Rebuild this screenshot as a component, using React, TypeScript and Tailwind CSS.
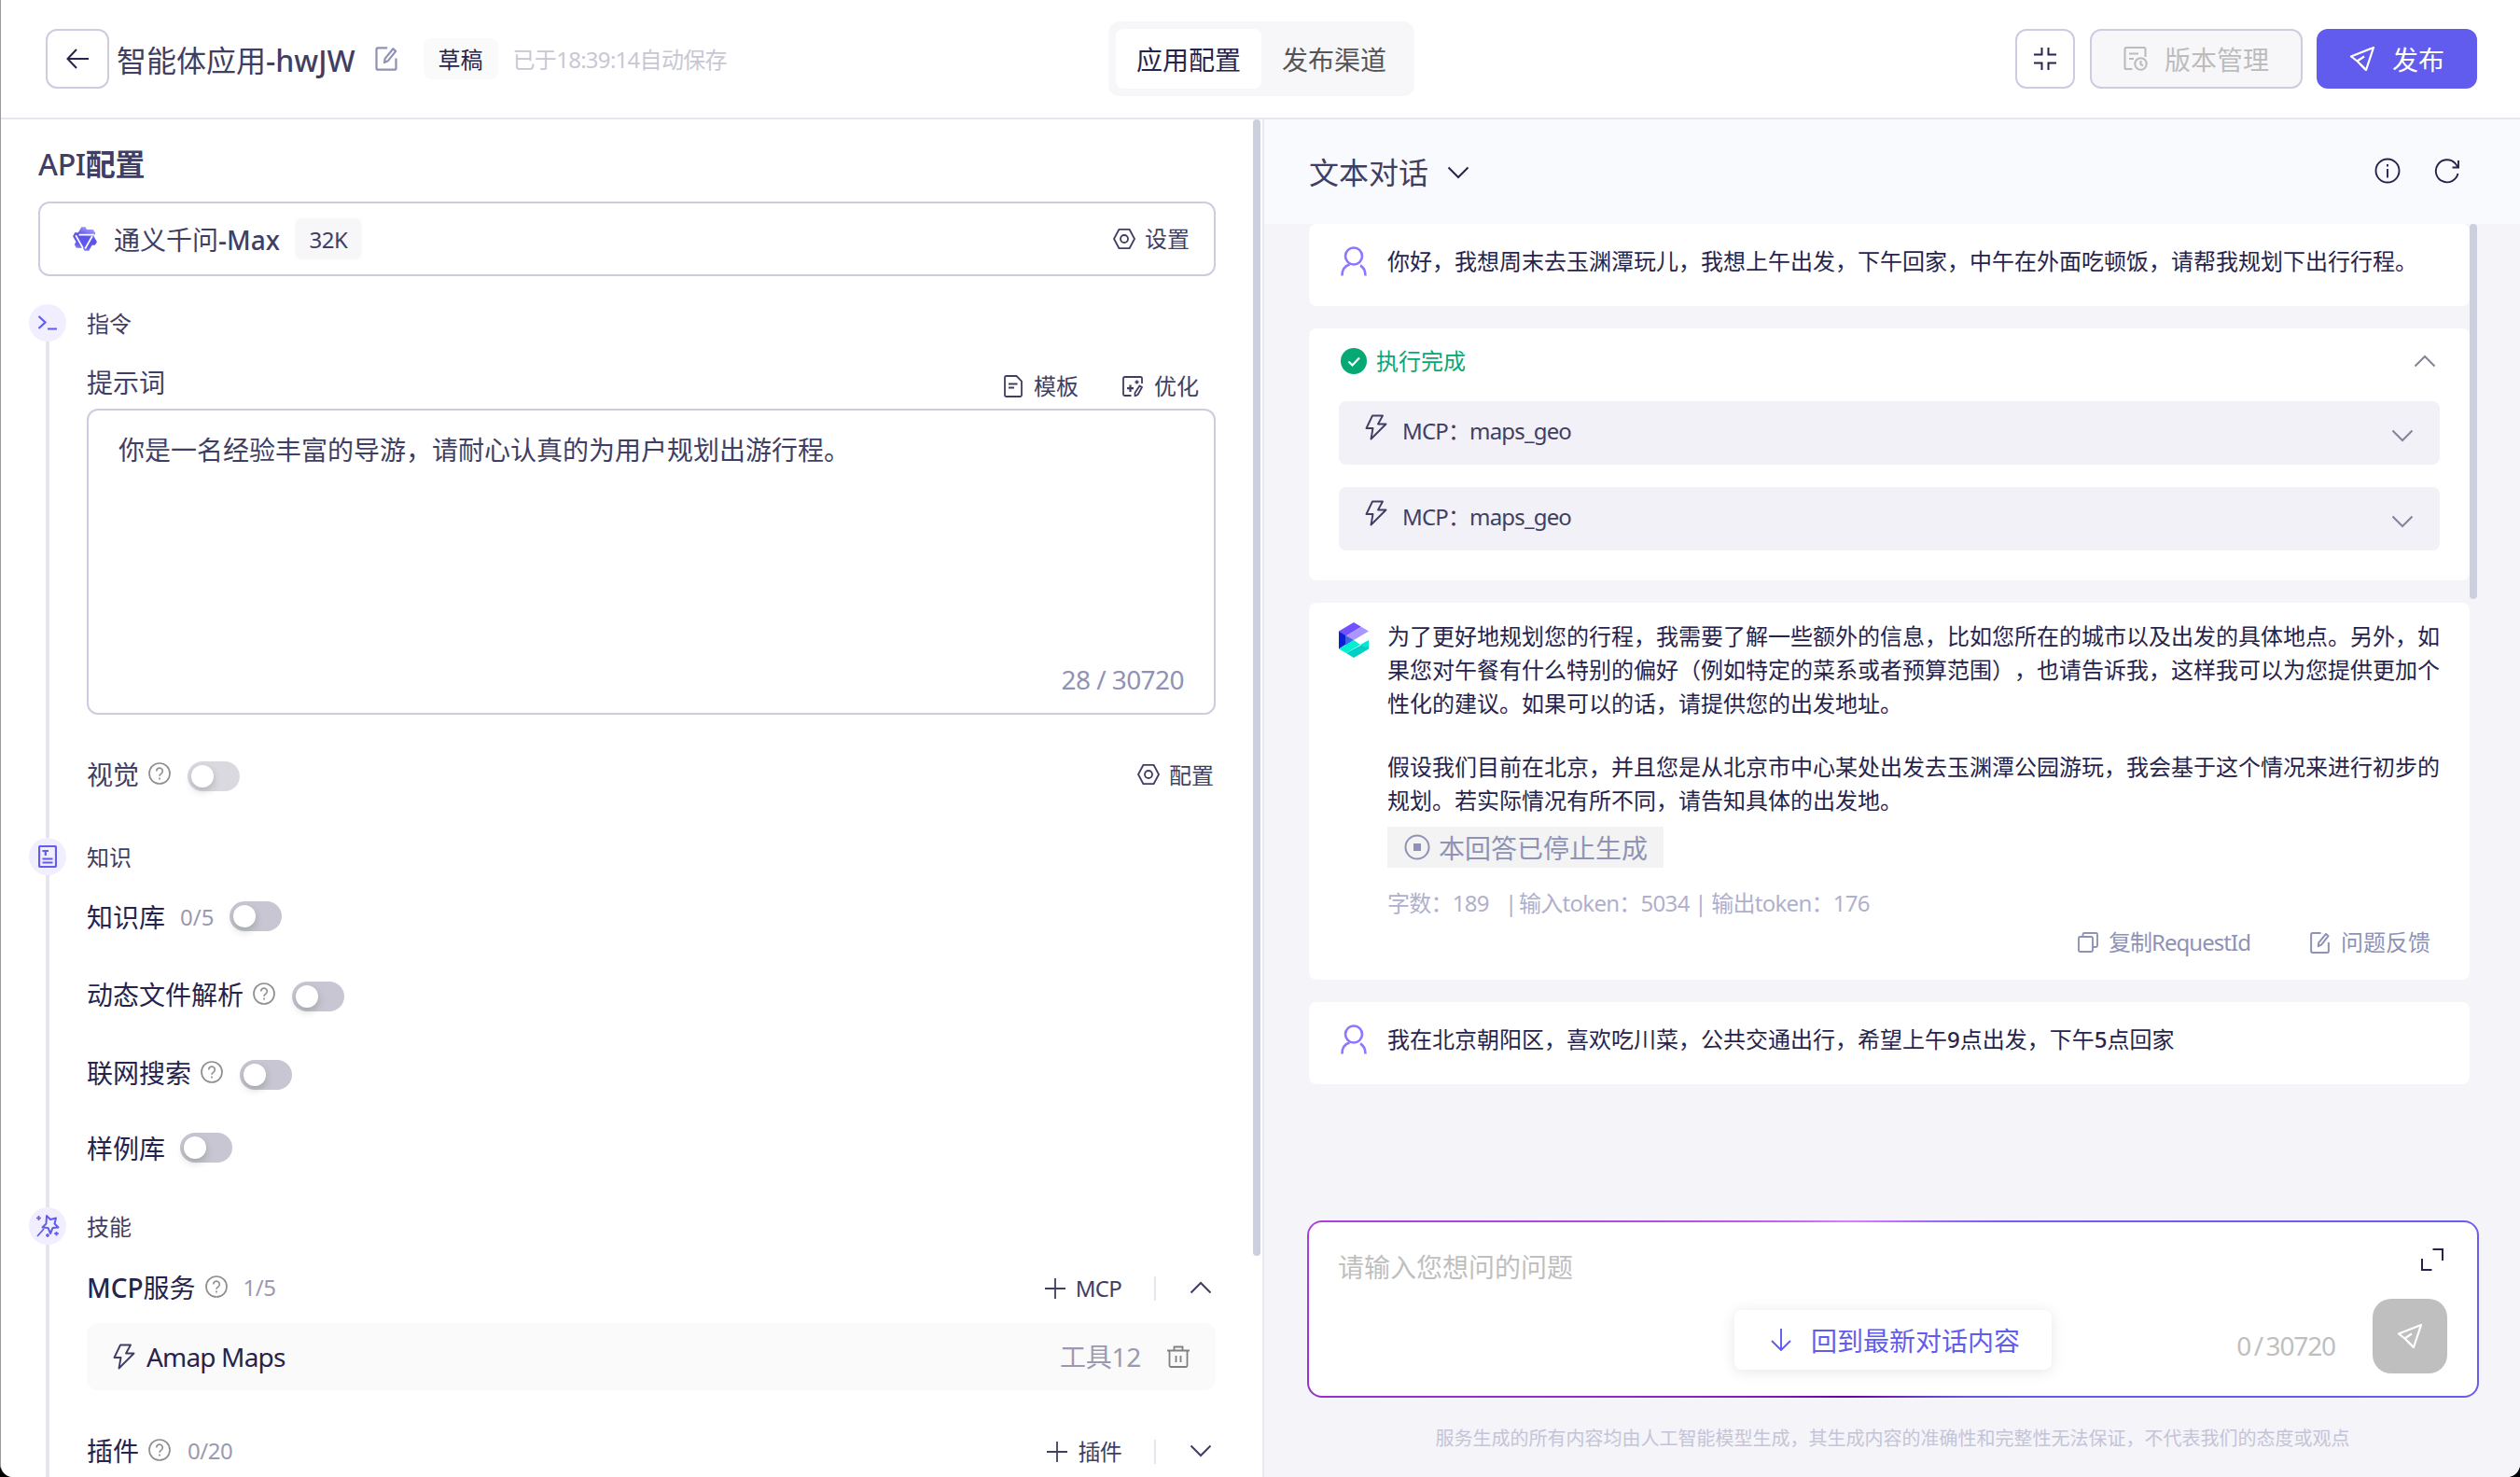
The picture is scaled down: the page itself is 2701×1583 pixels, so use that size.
import type { ReactNode } from 'react';
import clsx from 'clsx';

type IconProps = { className?: string };

const Svg = ({ className, box = '0 0 24 24', width = 2, children }: IconProps & { box?: string; width?: number; children: ReactNode }) => (
  <svg viewBox={box} className={clsx('shrink-0', className)} fill="none" stroke="currentColor" strokeWidth={width}>
    {children}
  </svg>
);

const EditIcon = ({ className }: IconProps) => (
  <Svg className={className} width={1.9}>
    <path d="M13 2H4.5A1.5 1.5 0 0 0 3 3.500v17A1.500 1.500 0 0 0 4.500 22h15a1.500 1.500 0 0 0 1.500-1.500V11.500" />
    <path d="M18.300 2.800l2.400 2.200-7.200 9-3.200 1.500 0.500-3.600z" strokeLinejoin="round" />
  </Svg>
);

const HelpIcon = ({ className }: IconProps) => (
  <Svg className={clsx('size-6 text-[#8f8f8f]', className)} width={1.7}>
    <circle cx="12" cy="12" r="11" />
    <path d="M8.700 9.400a3.300 3.300 0 1 1 5.200 2.700c-1.200.8-1.900 1.300-1.900 2.700" />
    <path d="M12 16.600v2" />
  </Svg>
);

const HexIcon = ({ className }: IconProps) => (
  <Svg className={clsx('size-6', className)} width={1.8}>
    <path d="M6.500 1.800h11L23 12l-5.500 10.200h-11L1 12z" strokeLinejoin="round" />
    <circle cx="12" cy="12" r="4" />
  </Svg>
);

const BoltIcon = ({ className }: IconProps) => (
  <Svg className={clsx('h-7 w-6', className)} box="0 0 24 28" width={1.9}>
    <path d="M8 1.500h11l-5 9h8.500L6.500 26.500l2-11.500h-7z" strokeLinejoin="round" />
  </Svg>
);

const SendIcon = ({ className }: IconProps) => (
  <Svg className={clsx('size-7', className)} box="0 0 28 28" width={2.2}>
    <path d="M26 2L2 11.500l6.500 5L18 26z" strokeLinejoin="round" />
    <path d="M8.500 16.500L16 11.500M18 26l-6.500-6.500" />
  </Svg>
);

const Chevron = ({ up, className }: IconProps & { up?: boolean }) => (
  <Svg className={clsx('h-3.5 w-6', className)} box="0 0 24 14" width={2}>
    <path d={up ? 'M1.500 12.500L12 2l10.500 10.500' : 'M1.500 1.500L12 12 22.500 1.500'} />
  </Svg>
);

const PlusIcon = () => (
  <Svg className="size-[22px]" box="0 0 22 22" width={1.8}>
    <path d="M11 0v22M0 11h22" />
  </Svg>
);

const UserIcon = () => (
  <Svg className="h-8 w-7 text-[#8f75ff]" box="0 0 28 32" width={2.6}>
    <circle cx="14" cy="10.500" r="9" />
    <path d="M1.500 31.500c0-6 3-10.500 8-12M26.500 31.500c0-5-2-9-5.500-11" />
  </Svg>
);

const QwenLogo = () => (
  <svg viewBox="0 0 24 24" className="size-7 shrink-0">
    <defs>
      <linearGradient id="qwen" x1="0.800" y1="0" x2="0.400" y2="1">
        <stop offset="0" stopColor="#b3adf8" />
        <stop offset="0.450" stopColor="#5b52ea" />
        <stop offset="0.800" stopColor="#625aec" />
        <stop offset="1" stopColor="#8d86f2" />
      </linearGradient>
    </defs>
    <path
      fill="url(#qwen)"
      d="M12.604 1.340c.393.690.784 1.382 1.174 2.075a.18.18 0 00.157.091h5.552c.174 0 .322.110.446.327l1.454 2.570c.190.337.240.478.024.837-.260.430-.513.864-.760 1.300l-.367.658c-.106.196-.223.280-.040.512l2.652 4.637c.172.301.111.494-.043.770-.437.785-.882 1.564-1.335 2.340-.159.272-.352.375-.680.370-.777-.016-1.552-.010-2.327.016a.099.099 0 00-.081.050 575.097 575.097 0 01-2.705 4.740c-.169.293-.380.363-.725.364-.997.003-2.002.004-3.017.002a.537.537 0 01-.465-.271l-1.335-2.323a.09.09 0 00-.083-.049H4.982c-.285.030-.553-.001-.805-.092l-1.603-2.770a.543.543 0 01-.002-.540l1.207-2.120a.198.198 0 000-.197 550.951 550.951 0 01-1.875-3.272l-.790-1.395c-.160-.310-.173-.496.095-.965.465-.813.927-1.625 1.387-2.436.132-.234.304-.334.584-.335a338.300 338.300 0 012.589-.001.124.124 0 00.107-.063l2.806-4.895a.488.488 0 01.422-.246c.524-.001 1.053 0 1.583-.006L11.704 1c.341-.003.724.032.900.340z"
    />
    <path d="M6.500 8.200h14M3.600 8.800l6.600 11.700M18.800 9.500l-6.600 11.500" stroke="#fff" strokeWidth="1.500" fill="none" />
  </svg>
);

const BotLogo = () => (
  <svg viewBox="0 0 34 38" className="h-[38px] w-[34px] shrink-0">
    <path d="M1 9.500L17 0l8 4.700L8 15z" fill="#7350ff" />
    <path d="M8 15L25 4.700l8 4.800L17 19z" fill="#a996ff" />
    <path d="M1 9.500L8 14v10L1 28.500z" fill="#0a1fd6" />
    <path d="M8 14l9 5-9 6z" fill="#3d63e6" />
    <path d="M1 28.500L17 19l7 5L9 33z" fill="#00f0d0" />
    <path d="M9 33l24-13v8.500L17 38z" fill="#00cfc6" />
    <path d="M24 24l9-5v6l-3 2z" fill="#00ead2" />
  </svg>
);

const Toggle = ({ disabled, className }: IconProps & { disabled?: boolean }) => (
  <span className={clsx('flex h-8 w-14 shrink-0 items-center rounded-full px-1', disabled ? 'bg-[#dad9e0]' : 'bg-[#c8c6d2]', className)}>
    <span className="size-6 rounded-full bg-white shadow-[0_4px_8px_rgba(0,35,11,0.2)]" />
  </span>
);

const Section = ({ title, icon, className, children }: { title: string; icon: ReactNode; className: string; children: ReactNode }) => (
  <section className={clsx('flex shrink-0', className)}>
    <div className="flex w-10 flex-col items-center text-[#615ced]">
      <div className="flex size-10 shrink-0 items-center justify-center rounded-full bg-[#f1efff]">{icon}</div>
      <div className="w-1 flex-1 bg-[#e6e6ee]" />
    </div>
    <div className="ml-[22px] flex w-[1210px] flex-col">
      <div className="flex h-10 shrink-0 items-center pt-0.5 text-2xl text-[#403e63]">{title}</div>
      {children}
    </div>
  </section>
);

const knowledge = [
  { label: '知识库', count: '0/5', help: false, row: 'mt-6', toggle: 'ml-[17px]' },
  { label: '动态文件解析', help: true, row: 'mt-[46px]', toggle: 'ml-[18px]' },
  { label: '联网搜索', help: true, row: 'mt-11', toggle: 'ml-[18px]' },
  { label: '样例库', help: false, row: 'mt-[38px]', toggle: 'ml-4' },
];

const Header = () => (
  <header className="flex h-32 shrink-0 items-center border-b-2 border-[#e6e6ee] bg-white pr-[46px] pl-12">
    <div className="flex w-[1139px] items-center">
      <button className="flex h-16 w-[68px] items-center justify-center rounded-xl border-2 border-[#cccdde]">
        <Svg className="size-6 text-[#26244c]" width={2}>
          <path d="M24 12H1.500M11 2L1.500 12 11 22" />
        </Svg>
      </button>
      <h1 className="ml-2 pt-1 text-[32px] text-[#403e63]">
        智能体应用<span className="font-medium">-hwJW</span>
      </h1>
      <EditIcon className="ml-[19px] size-7 text-[#8f92b5]" />
      <span className="ml-[26px] flex h-11 items-center rounded-lg bg-[#fafafa] px-4 pt-0.5 text-2xl text-[#26244c]">草稿</span>
      <span className="ml-4 pt-0.5 text-2xl tracking-[-0.030em] text-[#c8c8d4]">已于18:39:14自动保存</span>
    </div>
    <nav className="flex h-20 w-[328px] items-center rounded-xl bg-[#f7f7f9] p-2 text-[28px]">
      <span className="flex h-16 w-[156px] items-center justify-center rounded-lg bg-white pt-0.5 text-[#26244c]">应用配置</span>
      <span className="flex h-16 w-[156px] items-center justify-center pt-0.5 text-[#555]">发布渠道</span>
    </nav>
    <div className="ml-auto flex gap-4">
      <button className="flex size-16 items-center justify-center rounded-xl border-2 border-[#cccdde]">
        <Svg className="size-6 text-[#26244c]" width={2}>
          <path d="M8.500 0v7.500H0M15.500 0v7.500H24M8.500 24v-7.500H0M15.500 24v-7.500H24" />
        </Svg>
      </button>
      <button className="flex h-16 w-[228px] items-center justify-center gap-[18px] rounded-xl border-2 border-[#cccdde] bg-[#f7f7f9] text-[28px] text-[#bcbcbc]">
        <Svg className="size-[26px]" box="0 0 26 26" width={2.1}>
          <path d="M9.500 24H3a1.500 1.500 0 0 1-1.500-1.500v-20A1.500 1.500 0 0 1 3 1h19a1.500 1.500 0 0 1 1.500 1.500V11M6 7.500h10M6 13h5" />
          <circle cx="18.500" cy="18.500" r="6.200" />
          <path d="M18.500 15v4l2.500 1.500" />
        </Svg>
        <span className="pt-0.5">版本管理</span>
      </button>
      <button className="-ml-px flex h-16 w-[172px] items-center justify-center gap-[18px] rounded-xl bg-[#615ced] text-[28px] text-white">
        <SendIcon />
        <span className="pt-0.5">发布</span>
      </button>
    </div>
  </header>
);

const AddActions = ({ label, up }: { label: string; up?: boolean }) => (
  <div className="ml-auto flex items-center pt-0.5 pr-1 text-2xl text-[#403e63]">
    <PlusIcon />
    <span className="ml-[11px] tracking-[-0.030em]">{label}</span>
    <span className="ml-[35px] h-[26px] w-0.5 bg-[#e6e6ee]" />
    <Chevron up={up} className="mb-0.5 ml-9" />
  </div>
);

const ConfigPanel = () => (
  <aside className="flex w-[1352px] shrink-0 overflow-hidden bg-white">
    <div className="flex w-[1342px] flex-col">
      <h2 className="mt-6 ml-10 flex h-12 shrink-0 items-center text-[32px] font-bold tracking-[-0.010em] text-[#403e63]">
        <span className="font-medium">API</span>配置
      </h2>
      <div className="mt-4 ml-10 flex h-20 w-[1262px] shrink-0 items-center rounded-xl border-2 border-[#cccdde] pr-[26px] pl-[34px]">
        <QwenLogo />
        <span className="ml-[17px] pt-0.5 text-[28px] text-[#403e63]">
          通义千问<span className="font-medium">-Max</span>
        </span>
        <span className="ml-4 flex h-11 w-[72px] items-center justify-center rounded-lg bg-[#f7f7fa] pt-0.5 text-2xl tracking-[-0.020em] text-[#403e63]">32K</span>
        <span className="ml-auto flex items-center gap-2.5 text-2xl text-[#403e63]">
          <HexIcon />
          设置
        </span>
      </div>

      <div className="mt-[30px] ml-[30px] flex flex-col">
        <Section
          title="指令"
          className="h-[572px]"
          icon={
            <Svg className="h-5 w-[22px]" box="0 0 22 20" width={2.2}>
              <path d="M1.500 3l7 6.500-7 6.500M11 16.500h10" />
            </Svg>
          }
        >
          <div className="mt-5 flex h-[52px] shrink-0 items-center pr-[18px] text-[#403e63]">
            <span className="pb-1 text-[28px]">提示词</span>
            <span className="ml-auto flex items-center gap-3 pt-1 text-2xl">
              <Svg className="h-6 w-5" box="0 0 20 24" width={1.8}>
                <path d="M2.500 1h11L19 6.500v15a1.500 1.500 0 0 1-1.500 1.500h-15A1.500 1.500 0 0 1 1 21.500v-19A1.500 1.500 0 0 1 2.500 1zM5 9.500h9.500M5 13.500h6" />
              </Svg>
              模板
            </span>
            <span className="ml-[47px] flex items-center gap-3 pt-1 text-2xl">
              <Svg className="size-[22px]" box="0 0 22 22" width={1.8}>
                <path d="M21 8V2.500A1.500 1.500 0 0 0 19.500 1h-17A1.500 1.500 0 0 0 1 2.500v17A1.500 1.500 0 0 0 2.500 21h7" />
                <path d="M18.500 10.500l2.500 1.500-4.500 8-3 1.500v-3.500z" strokeLinejoin="round" />
                <path d="M8.500 9.500v7.500M5 13.200h7" strokeWidth={2.2} />
                <path d="M15.500 4.500v4M13.500 6.500h4" />
              </Svg>
              优化
            </span>
          </div>
          <div className="flex h-[328px] shrink-0 flex-col justify-between rounded-xl border-2 border-[#cccdde] pt-[22px] pr-8 pb-4 pl-8 text-[28px] leading-10 text-[#403e63]">
            <p>你是一名经验丰富的导游，请耐心认真的为用户规划出游行程。</p>
            <span className="self-end tracking-[-0.020em] text-[#8f92b5]">28 / 30720</span>
          </div>
          <div className="mt-[46px] flex h-10 shrink-0 items-center text-[28px] text-[#403e63]">
            <span className="pb-1">视觉</span>
            <HelpIcon className="mb-1.5 ml-2.5" />
            <Toggle disabled className="ml-[18px]" />
            <span className="ml-auto flex items-center gap-2.5 pr-0.5 pb-0.5 text-2xl">
              <HexIcon className="mb-0.5" />
              配置
            </span>
          </div>
        </Section>

        <Section
          title="知识"
          className="h-[396px]"
          icon={
            <Svg className="h-6 w-5" box="0 0 20 24" width={2.2}>
              <rect x="1" y="1" width="18" height="22" rx="1.500" />
              <path d="M4.500 6H11M7.800 6v5M4.500 14.500h11M4.500 18.500h11" />
            </Svg>
          }
        >
          {knowledge.map(item => (
            <div key={item.label} className={clsx('flex h-10 shrink-0 items-center text-[28px] text-[#26244c]', item.row)}>
              <span className={item.help ? 'pb-1' : 'pt-0.5'}>{item.label}</span>
              {item.help && <HelpIcon className="mb-1.5 ml-2.5" />}
              {item.count && <span className="ml-4 pt-0.5 text-2xl text-[#9b99b0]">{item.count}</span>}
              <Toggle className={item.toggle} />
            </div>
          ))}
        </Section>

        <Section
          title="技能"
          className="h-[300px]"
          icon={
            <Svg className="size-[26px]" box="0 0 26 26" width={2}>
              <path d="M12 2l4 4 6-1.500-1.500 6 4 4-6 .5-2.500 6-2.500-6-6-.5 4-4z" strokeLinejoin="round" />
              <path d="M9 16l-7 8M3.500 2v5M1 4.500h5M13 21v4M11 23h4M22.500 19v4.500M20.200 21.200h4.600" strokeWidth={1.7} />
            </Svg>
          }
        >
          <div className="mt-[26px] flex h-10 shrink-0 items-center text-[28px] text-[#26244c]">
            <span>
              <span className="font-medium">MCP</span>服务
            </span>
            <HelpIcon className="mb-0.5 ml-2.5" />
            <span className="ml-[17px] text-2xl tracking-[-0.020em] text-[#9b99b0]">1/5</span>
            <AddActions label="MCP" up />
          </div>
          <div className="mt-[18px] flex h-[72px] shrink-0 items-center rounded-xl bg-[#fafafa] pr-7 pl-7 text-[28px] text-[#26244c]">
            <BoltIcon className="text-[#403e63]" />
            <span className="ml-3 tracking-[-0.030em]">Amap Maps</span>
            <span className="ml-auto tracking-[-0.010em] text-[#9b99b0]">工具12</span>
            <Svg className="ml-7 size-6 text-[#808080]" width={1.8}>
              <path d="M0 5.500h24M7.500 5V1.500h9V5M2.500 5.500v16A1.500 1.500 0 0 0 4 23h16a1.500 1.500 0 0 0 1.500-1.500v-16M9.500 11v7M14.500 11v7" />
            </Svg>
          </div>
          <div className="mt-[45px] flex h-10 shrink-0 items-center text-[28px] text-[#26244c]">
            <span>插件</span>
            <HelpIcon className="mb-0.5 ml-2.5" />
            <span className="ml-[18px] text-2xl tracking-[-0.020em] text-[#9b99b0]">0/20</span>
            <AddActions label="插件" />
          </div>
        </Section>
      </div>
    </div>
    <div className="h-[1218px] w-2 rounded-full bg-[#cccfdd]" />
  </aside>
);

const answer = [
  ['为了更好地规划您的行程，我需要了解一些额外的信息，比如您所在的城市以及出发的具体地点。另外，如', '果您对午餐有什么特别的偏好（例如特定的菜系或者预算范围），也请告诉我，这样我可以为您提供更加个', '性化的建议。如果可以的话，请提供您的出发地址。'],
  ['假设我们目前在北京，并且您是从北京市中心某处出发去玉渊潭公园游玩，我会基于这个情况来进行初步的', '规划。若实际情况有所不同，请告知具体的出发地。'],
];

const UserMessage = ({ children }: { children: ReactNode }) => (
  <div className="flex h-[88px] shrink-0 rounded-lg bg-white pt-6 pl-[34px] text-2xl text-[#26244c]">
    <UserIcon />
    <p className="ml-[22px] whitespace-nowrap">{children}</p>
  </div>
);

const ChatPanel = () => (
  <main className="flex flex-1 flex-col border-l-2 border-[#e9e9f0] bg-[#f4f4f9]">
    <div className="flex h-28 shrink-0 items-center bg-[#f9fafe] pr-16 pb-0.5 pl-12 text-[#26244c]">
      <span className="pt-1 text-[32px] text-[#403e63]">文本对话</span>
      <Chevron className="mt-1 ml-5" />
      <Svg className="ml-auto size-7" box="0 0 28 28" width={1.9}>
        <circle cx="14" cy="14" r="12.500" />
        <path d="M14 12v9.500M14 7v2.500" />
      </Svg>
      <Svg className="ml-9 size-7" box="0 0 28 28" width={1.9}>
        <path d="M25.500 17A12 12 0 1 1 22.500 6l3 4M26 3v7.500h-6.500" />
      </Svg>
    </div>

    <div className="flex min-h-0 flex-1 pl-12">
      <div className="flex w-[1244px] flex-col gap-6">
        <UserMessage>你好，我想周末去玉渊潭玩儿，我想上午出发，下午回家，中午在外面吃顿饭，请帮我规划下出行行程。</UserMessage>

        <div className="flex h-[270px] shrink-0 flex-col rounded-lg bg-white px-8 pt-4">
          <div className="flex h-10 items-center pr-1 pb-0.5 pl-0.5">
            <Svg className="size-7 text-white" box="0 0 28 28" width={2.2}>
              <circle cx="14" cy="14" r="14" fill="#06a874" stroke="none" />
              <path d="M8.500 14.500l4 4 7.500-8" />
            </Svg>
            <span className="ml-2.5 text-2xl text-[#06a874]">执行完成</span>
            <Chevron up className="ml-auto text-[#85839b]" />
          </div>
          <div className="mt-[22px] flex flex-col gap-6">
            {['maps_geo', 'maps_geo'].map((tool, i) => (
              <div key={i} className="flex h-[68px] rounded-lg bg-[#f1f1f7] pr-7 pl-7 text-2xl text-[#403e63]">
                <BoltIcon className="mt-3.5" />
                <span className="mt-4 ml-4 tracking-[-0.035em]">MCP：{tool}</span>
                <Chevron className="mt-[30px] ml-auto text-[#85839b]" />
              </div>
            ))}
          </div>
        </div>

        <div className="flex h-[404px] shrink-0 rounded-lg bg-white pt-[18px] pl-[31px]">
          <div className="pt-[3px]">
            <BotLogo />
          </div>
          <div className="ml-[19px] flex w-[1128px] flex-col">
            <div className="flex flex-col gap-8 text-2xl leading-9 whitespace-nowrap text-[#26244c]">
              {answer.map(lines => (
                <p key={lines[0]}>
                  {lines.map(line => (
                    <span key={line} className="block">{line}</span>
                  ))}
                </p>
              ))}
            </div>
            <div className="mt-2.5 flex h-11 w-[296px] items-center bg-[#f3f3f3] pl-[18px] text-[28px] text-[#8f92b5]">
              <Svg className="size-7" box="0 0 28 28" width={2}>
                <circle cx="14" cy="14" r="12.500" />
                <rect x="10" y="10" width="8" height="8" fill="currentColor" stroke="none" />
              </Svg>
              <span className="ml-[9px] pt-0.5">本回答已停止生成</span>
            </div>
            <div className="mt-5 flex h-9 items-center text-2xl tracking-[-0.030em] whitespace-pre text-[#b0b0cc]">
              <span className="w-[126px]">字数：189</span>
              <span className="w-[15px]">|</span>
              <span>输入token：5034 | 输出token：176</span>
            </div>
            <div className="mt-[6px] flex h-9 items-center justify-end pr-2.5 text-2xl text-[#8f92b5]">
              <Svg className="size-[22px]" box="0 0 22 22" width={1.9}>
                <rect x="1" y="5" width="15" height="16" rx="1.500" />
                <path d="M5.500 5V2.500A1.500 1.500 0 0 1 7 1h12.500A1.500 1.500 0 0 1 21 2.500v12a1.500 1.500 0 0 1-1.500 1.500H16" />
              </Svg>
              <span className="ml-[11px] tracking-[-0.040em]">复制RequestId</span>
              <EditIcon className="ml-[62px] size-[25px]" />
              <span className="ml-2.5">问题反馈</span>
            </div>
          </div>
        </div>

        <UserMessage>
          我在北京朝阳区，喜欢吃川菜，公共交通出行，希望上午<b className="font-medium">9</b>点出发，下午<b className="font-medium">5</b>点回家
        </UserMessage>
      </div>
      <div className="h-[402px] w-2 rounded-full bg-[#cccfdd]" />
    </div>

    <div className="relative ml-[46px] h-[190px] w-[1256px] shrink-0 rounded-2xl bg-[conic-gradient(from_332deg,#dc7dff_0deg,#7a5cf5_80deg,#6a5cf0_118deg,#6257e0_165deg,#6a00a0_238deg,#a03cd0_300deg,#dc7dff_360deg)] p-0.5">
      <div className="flex h-full justify-between rounded-[14px] bg-white pr-8 pl-[31px]">
        <p className="pt-7 text-[28px] leading-10 text-[#bfbfbf]">请输入您想问的问题</p>
        <div className="flex flex-col items-end justify-between pt-7 pb-6">
          <Svg className="mr-1 size-6 text-[#26244c]" width={2}>
            <path d="M12.500 1H23v12M1 11v12h10.500" />
          </Svg>
          <div className="flex items-end gap-10">
            <span className="mb-2.5 text-[28px] leading-10 tracking-[-0.040em] text-[#bfbfbf]">0&#8201;/&#8201;30720</span>
            <button className="flex size-20 items-center justify-center rounded-[20px] bg-[#bfbfbf] text-white">
              <SendIcon />
            </button>
          </div>
        </div>
      </div>
      <button className="absolute top-24 left-[458px] flex h-16 w-[340px] items-center rounded-lg bg-white pl-[38px] text-[28px] text-[#615ced] shadow-[0_2px_16px_rgba(0,0,0,0.1)]">
        <Svg className="size-6" width={1.9}>
          <path d="M12 0v22.500M2 13l10 10 10-10" />
        </Svg>
        <span className="ml-5 pt-0.5">回到最新对话内容</span>
      </button>
    </div>
    <footer className="flex h-[85px] shrink-0 items-center justify-center pt-0.5 pl-px text-xl text-[#c4c4d8]">
      服务生成的所有内容均由人工智能模型生成，其生成内容的准确性和完整性无法保证，不代表我们的态度或观点
    </footer>
  </main>
);

export default function App() {
  return (
    <div lang="zh-CN" className="h-[1583px] w-[2701px] overflow-hidden bg-black font-['Noto_Sans','Noto_Sans_CJK_SC',sans-serif] [text-spacing-trim:space-all]">
      <div className="flex h-full flex-col overflow-hidden rounded-b-[14px] border-l border-[#9a9a9a] bg-white">
        <Header />
        <div className="flex min-h-0 flex-1">
          <ConfigPanel />
          <ChatPanel />
        </div>
      </div>
    </div>
  );
}
